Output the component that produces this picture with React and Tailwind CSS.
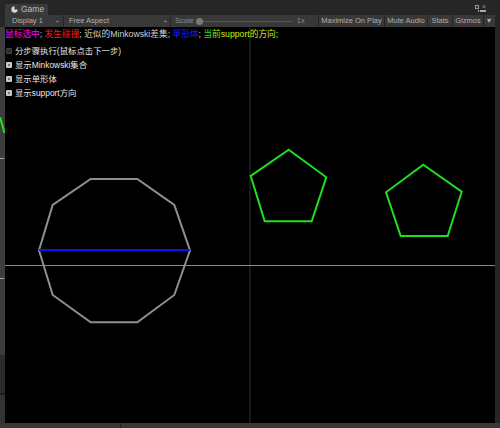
const font = "font-['Liberation_Sans','Noto_Sans_CJK_SC',sans-serif]";

const Checkbox = function ({ checked, label }) {
  return (
    <div className="flex h-[14px] items-center gap-[3px] pl-[1px]">
      <span
        className={`flex size-[6px] items-center justify-center rounded-[1px] ${checked ? "bg-[#c8c8c8]" : "bg-[#2e2e2e] border border-[#444]"}`}
      >
        {checked && <span className="size-[2px] bg-[#777]" />}
      </span>
      <span className="text-[8.4px] leading-none text-[#e6e6e6]">{label}</span>
    </div>
  );
};

const ToolButton = function ({ children, className = "" }) {
  return (
    <div
      className={`flex h-full items-center justify-center border-l border-[#252525] text-[7.5px] text-[#b0b0b0] ${className}`}
    >
      {children}
    </div>
  );
};

export default function App() {
  return (
    <div className={`flex h-[428px] w-[500px] flex-col overflow-hidden bg-[#262626] ${font}`}>
      {/* tab bar */}
      <div className="relative flex h-[15px] shrink-0 items-end pl-[5px]">
        <div className="flex h-[11px] w-[43px] items-center gap-[3px] rounded-t-[2px] bg-[#3a3a3a] pl-[6px] text-[8.5px] text-[#bdbdbd]">
          <svg width="7" height="7" viewBox="0 0 10 10">
            <path d="M5 0.5 A4.5 4.5 0 1 0 9.5 5 L5 5 Z" fill="#d8d8d8" />
          </svg>
          <span>Game</span>
        </div>
        <div className="absolute right-[14px] top-[3px] flex items-center gap-[3px] text-[7px] leading-none text-[#9a9a9a]">
          <span className="size-[4px] border border-[#9a9a9a]" />
          <span>×</span>
        </div>
        <div className="absolute right-[14px] top-[10px] flex items-center gap-[1px]">
          <span className="h-[2px] w-[1px] bg-[#aaa]" />
          <span className="h-[2px] w-[6px] bg-[#aaa]" />
        </div>
      </div>

      {/* toolbar */}
      <div className="mx-[5px] flex h-[12px] shrink-0 items-center bg-[#383838] text-[7.5px] text-[#b0b0b0]">
        <div className="flex h-full w-[58px] items-center justify-between pl-[7px] pr-[4px]">
          <span>Display 1</span>
          <span className="text-[6px]">÷</span>
        </div>
        <div className="flex h-full w-[107px] items-center justify-between border-l border-[#252525] pl-[5px] pr-[3px]">
          <span>Free Aspect</span>
          <span className="text-[6px]">÷</span>
        </div>
        <div className="flex h-full w-[148px] items-center border-l border-[#252525] pl-[4px]">
          <span className="text-[#8a8a8a]">Scale</span>
          <div className="relative ml-[2px] flex h-full w-[96px] items-center">
            <div className="h-[1px] w-full bg-[#555]" />
            <span className="absolute left-[0px] size-[7px] rounded-full bg-[#7a7a7a]" />
          </div>
          <span className="ml-[5px] text-[#8a8a8a]">1x</span>
        </div>
        <ToolButton className="w-[66px]">Maximize On Play</ToolButton>
        <ToolButton className="w-[43px]">Mute Audio</ToolButton>
        <ToolButton className="w-[25px]">Stats</ToolButton>
        <ToolButton className="w-[31px]">Gizmos</ToolButton>
        <ToolButton className="w-[11px] text-[6px]">▾</ToolButton>
      </div>

      {/* main row */}
      <div className="flex min-h-0 flex-1">
        <div className="relative flex w-[5px] shrink-0 flex-col bg-[#3d3d3d]">
          <div className="mt-[131px] h-[1px] w-[4px] bg-[#aaa]" />
          <div className="mt-[119px] h-[1px] w-[4px] bg-[#aaa]" />
          <div className="mt-[76px] h-[38px] w-full bg-[#2b2b2b]" />
          <div className="h-[2px] w-full bg-[#1c1c1c]" />
          <div className="flex-1 bg-[#333]" />
          <svg className="absolute left-0 top-[90px]" width="5" height="17" viewBox="0 0 5 17">
            <path d="M0 0 L4.5 16" stroke="#1ee01e" strokeWidth="2" />
          </svg>
        </div>

        <div className="relative flex-1 overflow-hidden bg-black">
          <svg
            className="absolute inset-0"
            width="490"
            height="396"
            viewBox="5 27 490 396"
          >
            <line x1="250" y1="27" x2="250" y2="423" stroke="#2e2e2e" strokeWidth="1" />
            <line x1="5" y1="265.5" x2="495" y2="265.5" stroke="#8c8c8c" strokeWidth="1" />
            <polygon
              points="90.7,179 137.3,179 174.3,205 190,250.3 174.3,295 137.3,322.3 90.7,322.3 52.7,295 39,250.3 52.7,205"
              fill="none"
              stroke="#8f8f8f"
              strokeWidth="2"
            />
            <line x1="39" y1="250" x2="190" y2="250" stroke="#1010ff" strokeWidth="2.2" />
            <polygon
              points="288.7,149.7 326.3,177.3 311.7,221.3 264.7,221.3 250.7,176"
              fill="none"
              stroke="#1ee01e"
              strokeWidth="2"
            />
            <polygon
              points="423.3,164.7 461.7,191.7 447.7,236 400.7,236 386,192.3"
              fill="none"
              stroke="#1ee01e"
              strokeWidth="2"
            />
          </svg>

          <div className="relative flex flex-col">
            <p className="mt-[1px] h-[12px] text-[8.7px] leading-[12px] whitespace-nowrap text-[#d0d0d0]">
              <span className="text-[#ff00ff]">鼠标选中</span>
              <span>; </span>
              <span className="text-[#ff1010]">发生碰撞</span>
              <span>; 近似的Minkowski差集; </span>
              <span className="text-[#1a1aff]">单形体</span>
              <span>; </span>
              <span className="text-[#22e022]">当</span>
              <span className="text-[#88ee00]">前</span>
              <span className="text-[#c8f000]">support的方向;</span>
            </p>
            <div className="mt-[4px] flex flex-col">
              <Checkbox checked={false} label="分步骤执行(鼠标点击下一步)" />
              <Checkbox checked label="显示Minkowski集合" />
              <Checkbox checked label="显示单形体" />
              <Checkbox checked label="显示support方向" />
            </div>
          </div>
        </div>

        <div className="w-[5px] shrink-0 bg-[#262626]" />
      </div>

      {/* bottom */}
      <div className="flex h-[5px] shrink-0 bg-[#383838]">
        <div className="w-[121px] border-r border-[#222]" />
      </div>
    </div>
  );
}
